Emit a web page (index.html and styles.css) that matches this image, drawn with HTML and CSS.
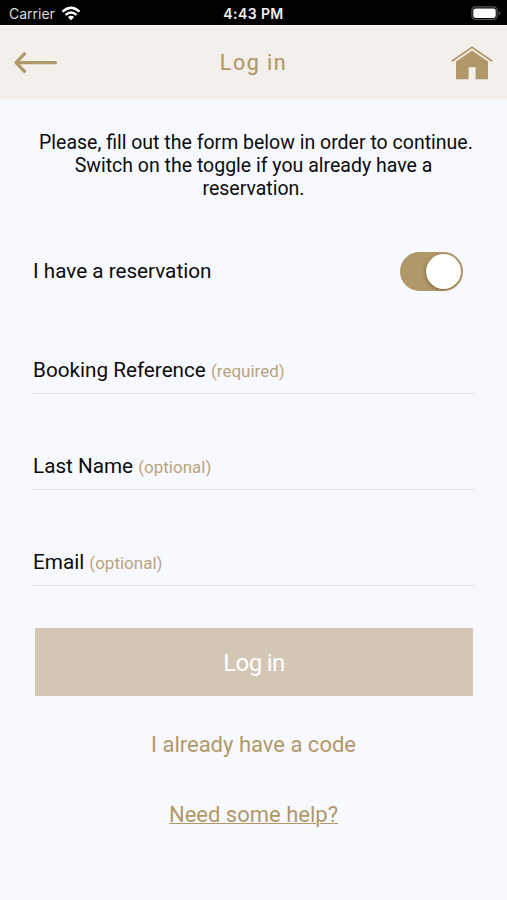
FILE: index.html
```html
<!DOCTYPE html>
<html lang="en">
<head>
	<meta charset="UTF-8">
	<title>Log in</title>
	<link rel="stylesheet" href="styles.css">
</head>
<body>

<div class="status">
	<div class="carrier">
		<span>Carrier</span>
		<svg class="wifi" width="20" height="15" viewBox="0 0 20 15">
			<path d="M1.5 5.6 Q10 -2.2 18.5 5.6" />
			<path d="M4.6 8.9 Q10 4 15.4 8.9" />
			<path class="dot" d="M6.9 11 Q10 8.4 13.1 11 L10 14.2 Z" />
		</svg>
	</div>
	<span class="time">4:43 PM</span>
	<svg class="battery" width="30" height="15" viewBox="0 0 30 15">
		<rect class="case" x="0.9" y="0.9" width="25.2" height="12.6" rx="3.6" />
		<rect class="level" x="2.3" y="2.4" width="22.4" height="9.6" rx="2.2" />
		<path class="tip" d="M27.6 5 Q29.2 5.8 29.2 7.2 Q29.2 8.6 27.6 9.4 Z" />
	</svg>
</div>

<header class="navbar">
	<a class="back" href="#" aria-label="Back">
		<svg width="46" height="24" viewBox="0 0 46 24">
			<path d="M42.5 11.6 H3 M11.5 2.8 L3 11.6 L11.5 20.4" />
		</svg>
	</a>
	<h1>Log in</h1>
	<a class="home" href="#" aria-label="Home">
		<svg width="42" height="34" viewBox="0 0 42 34">
			<path class="roof" d="M0.8 15.2 L21 1.2 L41.2 15.2" />
			<path class="house" d="M5 15.4 L21 4.5 L37 15.4 V33.3 H24.6 V21.2 H17.6 V33.3 H5 Z" />
		</svg>
	</a>
</header>

<main>
	<p class="intro">&nbsp;Please, fill out the form below in order to continue. Switch on the toggle if you already have a reservation.</p>

	<div class="toggle-row">
		<span class="label">I have a reservation</span>
		<span class="toggle" role="switch" aria-checked="true"></span>
	</div>

	<div class="field">Booking Reference <small>(required)</small></div>
	<div class="field">Last Name <small>(optional)</small></div>
	<div class="field">Email <small>(optional)</small></div>

	<button class="submit">Log in</button>

	<a class="link" href="#">I already have a code</a>
	<a class="link help" href="#">Need some help?</a>
</main>

</body>
</html>
```
FILE: styles.css
```css
* { box-sizing: border-box; }
html { background: #f8f9fe; }
body { margin: 0; font-family: Roboto, sans-serif; font-size: 20.7px; color: #0b0b0d; }
a { color: #b19869; text-decoration: none; }
svg { display: block; }

.status { display: grid; grid-template-columns: 1fr auto 1fr; align-items: center; height: 25px; padding: 2px 6px 0 9px; background: #000; color: #fff; font-family: Inter, sans-serif; font-size: 14px; }
.carrier { display: flex; align-items: center; gap: 6px; color: #dcdcdc; }
.wifi { margin-top: -1px; }
.wifi path { fill: none; stroke: #fff; stroke-width: 2.5; }
.wifi .dot { fill: #fff; stroke: none; }
.time { margin-right: 3px; color: #f2f2f2; font-weight: 600; letter-spacing: 0.4px; }
.battery { justify-self: end; margin-top: -1px; }
.battery .case { fill: none; stroke: #5a5a5a; stroke-width: 1.2; }
.battery .level { fill: #fff; }
.battery .tip { fill: #5a5a5a; }

.navbar { display: grid; grid-template-columns: 1fr auto 1fr; align-items: center; height: 74px; padding: 0 14px 0 13px; background: #f3efeb; border-top: 1px solid #fff; }
.navbar h1 { margin: 0; padding-left: 1px; color: #b19869; font-size: 21.5px; font-weight: 400; letter-spacing: 1.5px; -webkit-text-stroke: 0.15px #b19869; }
.back path { fill: none; stroke: #b19869; stroke-width: 3.2; stroke-linecap: round; stroke-linejoin: round; }
.home { justify-self: end; }
.home .roof { fill: none; stroke: #b19869; stroke-width: 1.7; }
.home .house { fill: #b19869; }

main { display: flex; flex-direction: column; padding: 32px 32px 0; }
.intro { margin: 0; text-align: center; font-size: 19.5px; line-height: 23px; }
.toggle-row { display: flex; align-items: center; justify-content: space-between; height: 39px; margin-top: 52px; padding: 0 12px 0 1px; }
.label { padding-bottom: 2px; }
.toggle { display: flex; align-items: center; justify-content: flex-end; width: 63px; height: 39px; padding: 2px; border-radius: 20px; background: #b19869; }
.toggle::after { content: ""; width: 35px; height: 35px; border-radius: 50%; background: #fff; box-shadow: -1px 1px 3px rgba(80, 60, 20, 0.5); }

.field { height: 36px; margin-bottom: 59.8px; padding-left: 1px; border-bottom: 1px solid #e2e3ea; line-height: 24px; }
.toggle-row + .field { margin-top: 67px; }
.field small { color: #b9a47c; font-size: 17px; }

.submit { height: 68px; margin: -17px 2px 0 3px; padding: 1px 0 0; border: 0; background: #d3c6b4; color: #fff; font: 24px Roboto, sans-serif; letter-spacing: -0.6px; }
.link { align-self: center; margin-top: 36px; font-size: 22px; line-height: 26px; }
.help { margin-top: 44px; text-decoration: underline; text-decoration-thickness: 1px; }
```
